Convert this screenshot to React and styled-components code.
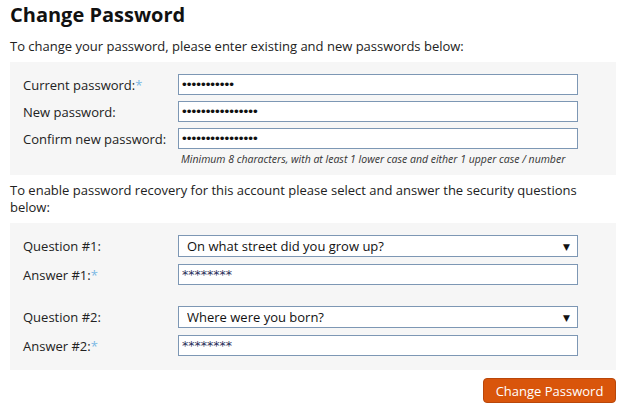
import React from "react";
import styled, { createGlobalStyle } from "styled-components";

const GlobalStyle = createGlobalStyle`
  body {
    margin: 0;
    background: #ffffff;
    font-family: "Open Sans", "DejaVu Sans", sans-serif;
    color: #1e1e1e;
  }
`;

const Page = styled.div`
  width: 629px;
  padding: 0 13px 0 10px;
  box-sizing: border-box;
`;

const Title = styled.h1`
  margin: 0;
  padding-top: 3px;
  font-size: 20px;
  line-height: 24px;
  font-weight: 700;
  color: #111;
`;

const Intro = styled.p`
  margin: ${(p) => p.$top || 11}px 0 ${(p) => p.$bottom || 7}px;
  max-width: ${(p) => p.$max || 606}px;
  font-size: 13px;
  line-height: 17px;
  color: #222;
`;

const Panel = styled.div`
  background: #f6f6f6;
  padding: 12px 0 ${(p) => p.$bottom || 14}px 13px;
  display: grid;
  grid-template-columns: 155px 400px;
  row-gap: ${(p) => p.$gap || 6}px;
  align-items: center;
`;

const Label = styled.label`
  font-size: 13px;
  color: #222;
`;

const Required = styled.span`
  color: #7ab8e4;
`;

const Input = styled.input`
  box-sizing: border-box;
  width: 400px;
  height: 21px;
  border: 1px solid #7d97b4;
  background: #fff;
  padding: 0 3px;
  font-family: "Liberation Sans", sans-serif;
  font-size: 13.5px;
  color: #111;
  outline: none;
`;

const Stars = styled(Input)`
  font-family: "DejaVu Sans", sans-serif;
  font-size: 12.5px;
  color: #2a2f5a;
`;

const SelectBox = styled.div`
  box-sizing: border-box;
  width: 400px;
  height: 22px;
  border: 1px solid #7d97b4;
  background: #fff;
  display: flex;
  align-items: center;
  padding: 0 7px 0 8px;
`;

const Select = styled.select`
  appearance: none;
  flex: 1;
  border: none;
  background: transparent;
  font-family: "Open Sans", "DejaVu Sans", sans-serif;
  font-size: 13px;
  color: #111;
  padding: 0;
  outline: none;
`;

const Caret = styled.span`
  font-size: 9px;
  color: #111;
`;

const Hint = styled.div`
  grid-column: 2;
  margin-top: -3px;
  padding-left: 3px;
  font-size: 10.5px;
  font-style: italic;
  color: #333;
`;

const Spacer = styled.div`
  grid-column: 1 / -1;
  height: ${(p) => p.$h}px;
`;

const Actions = styled.div`
  display: flex;
  justify-content: flex-end;
  padding-top: 8px;
`;

const Button = styled.button`
  width: 133px;
  height: 25px;
  background: #d9550b;
  border: 1px solid #b9470a;
  border-radius: 4px;
  color: #fff;
  font-family: "Open Sans", "DejaVu Sans", sans-serif;
  font-size: 13px;
  padding: 0;
  cursor: pointer;
`;

const QuestionRows = ({ num, question, options }) => (
  <>
    <Label>Question #{num}:</Label>
    <SelectBox>
      <Select defaultValue={question}>
        {options.map((o) => (
          <option key={o}>{o}</option>
        ))}
      </Select>
      <Caret>▼</Caret>
    </SelectBox>
    <Label>
      Answer #{num}:<Required>*</Required>
    </Label>
    <Stars type="text" defaultValue="********" />
  </>
);

const questions = [
  "On what street did you grow up?",
  "Where were you born?",
  "What was the name of your first pet?",
];

export default function App() {
  return (
    <>
      <GlobalStyle />
      <Page>
        <Title>Change Password</Title>
        <Intro>To change your password, please enter existing and new passwords below:</Intro>
        <Panel $bottom={9}>
          <Label>
            Current password:<Required>*</Required>
          </Label>
          <Input type="text" defaultValue="•••••••••••" />
          <Label>New password:</Label>
          <Input type="text" defaultValue="••••••••••••••••" />
          <Label>Confirm new password:</Label>
          <Input type="text" defaultValue="••••••••••••••••" />
          <Hint>Minimum 8 characters, with at least 1 lower case and either 1 upper case / number</Hint>
        </Panel>
        <Intro $top={7} $bottom={7} $max={580}>
          To enable password recovery for this account please select and answer the security
          questions below:
        </Intro>
        <Panel $gap={7}>
          <QuestionRows num={1} question={questions[0]} options={questions} />
          <Spacer $h={7} />
          <QuestionRows num={2} question={questions[1]} options={questions} />
        </Panel>
        <Actions>
          <Button type="button">Change Password</Button>
        </Actions>
      </Page>
    </>
  );
}
